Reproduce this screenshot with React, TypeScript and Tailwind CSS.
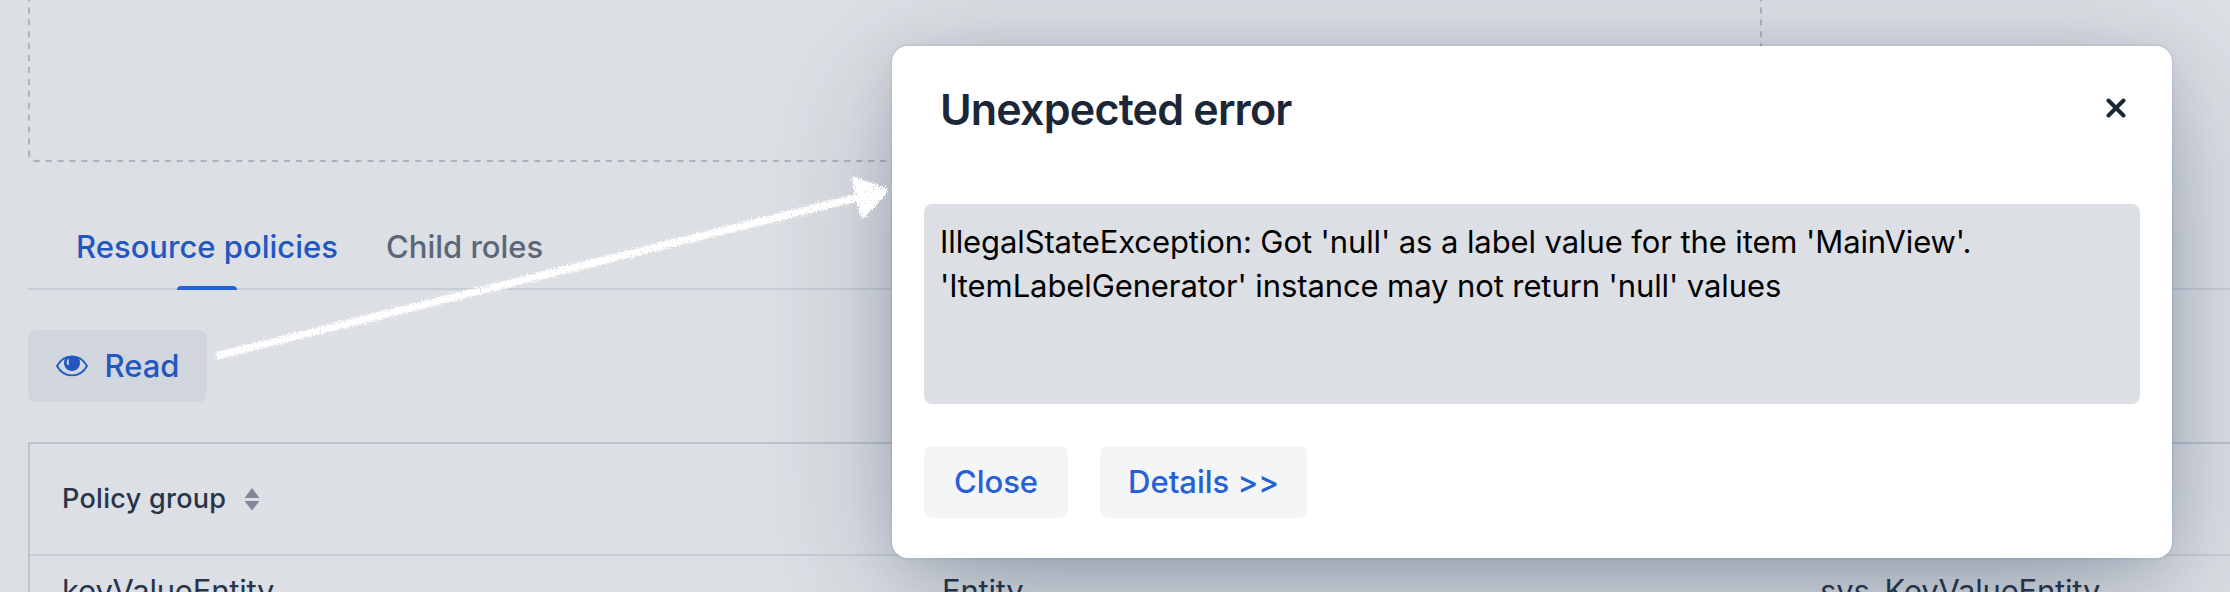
import React, { ReactNode } from 'react';

interface ButtonProps {
  children: ReactNode;
  className?: string;
}

function Button({ children, className = '' }: ButtonProps) {
  return (
    <button
      type="button"
      className={`flex h-[72px] items-center justify-center rounded-lg text-[31px] font-medium whitespace-nowrap ${className}`}
    >
      {children}
    </button>
  );
}

function EyeIcon() {
  return (
    <svg className="h-8 w-8 shrink-0" viewBox="0 0 16 16" fill="none">
      <path d="M.5 8C1.600 6 4 3.200 8 3.200S14.400 6 15.500 8C14.400 10 12 12.700 8 12.700S1.600 10 .5 8z" stroke="currentColor" strokeWidth="0.900" />
      <path d="M4.600 3.700C6.500 2.900 9.500 2.900 11.400 3.700C11.800 4.600 12 5.500 12 6.500a4 4 0 0 1-8 0c0-1 .2-1.900.6-2.800z" fill="currentColor" />
      <path d="M6.400 4.300C5.300 4.900 5.200 6.200 5.500 7.200C5.700 7.600 6.300 7.600 6.400 7.200z" fill="#d1d5dd" />
    </svg>
  );
}

function SortIcon() {
  return (
    <svg className="h-6 w-4" viewBox="0 0 16 24" fill="#7f8899">
      <path d="M8 1l7.500 10H.5z" />
      <path d="M8 23.500L.5 14h15z" />
    </svg>
  );
}

/**
 * Dashed outline of the empty drop zone, open at the top of the viewport
 */
function DropZone() {
  return (
    <svg className="h-[162px] w-[1734px] shrink-0" viewBox="0 0 1734 162" fill="none">
      <path
        d="M1 0V153Q1 161 9 161H1725Q1733 161 1733 153V0"
        stroke="#a9b2c0"
        strokeWidth="2"
        strokeDasharray="6 5.920"
        strokeDashoffset="4.500"
      />
    </svg>
  );
}

/**
 * Hand drawn chalk arrow going from the Read button to the dialog
 */
function ChalkArrow() {
  return (
    <svg className="pointer-events-none absolute left-0 top-0 h-[592px] w-[900px]" viewBox="0 0 900 592">
      <defs>
        <filter id="chalk" filterUnits="userSpaceOnUse" x="200" y="160" width="700" height="220">
          <feTurbulence type="fractalNoise" baseFrequency="0.8" numOctaves="2" seed="4" result="noise" />
          <feDisplacementMap in="SourceGraphic" in2="noise" scale="8" xChannelSelector="R" yChannelSelector="G" result="rough" />
          <feTurbulence type="fractalNoise" baseFrequency="0.45" numOctaves="2" seed="9" />
          <feColorMatrix values="0 0 0 0 1  0 0 0 0 1  0 0 0 0 1  9 0 0 0 -1.900" result="grain" />
          <feComposite in="rough" in2="grain" operator="in" />
        </filter>
      </defs>
      <g filter="url(#chalk)" stroke="#fff" strokeLinejoin="round">
        <path d="M216 356L560 271L860 197" strokeWidth="7.500" fill="none" />
        <path d="M855 180L885 191L863 215Z" strokeWidth="6" fill="#fff" />
      </g>
    </svg>
  );
}

function ErrorDialog() {
  return (
    <div className="absolute left-[892px] top-[46px] flex h-[512px] w-[1280px] flex-col rounded-2xl bg-white px-8 shadow-[0_0_0_2px_hsla(214,61%,25%,0.05),0_8px_48px_-6px_hsla(214,53%,23%,0.16),0_36px_128px_-16px_hsla(214,47%,21%,0.38)]">
      <div className="flex h-[158px] items-start justify-between pl-4 pr-[14px] pt-[34px]">
        <h2 className="text-[43px] leading-[58px] font-semibold tracking-[-0.8px] text-[#1b2637]">Unexpected error</h2>
        <svg className="mt-[18px] h-5 w-5" viewBox="0 0 20 20" fill="none" stroke="#1b2637" strokeWidth="4" strokeLinecap="round">
          <path d="M2.500 2.500l15 15M17.500 2.500l-15 15" />
        </svg>
      </div>
      <div className="h-[200px] rounded-lg bg-[#dcdfe4] px-4 pt-4 text-[31px] leading-[44px] tracking-[-0.1px] text-black">
        <p className="whitespace-nowrap">IllegalStateException: Got 'null' as a label value for the item 'MainView'.</p>
        <p className="whitespace-nowrap">'ItemLabelGenerator' instance may not return 'null' values</p>
      </div>
      <div className="mt-[42px] flex gap-8">
        <Button className="w-[144px] bg-[#f3f5f7] text-[#2461d4]">Close</Button>
        <Button className="w-[207px] bg-[#f3f5f7] text-[#2461d4]">Details &gt;&gt;</Button>
      </div>
    </div>
  );
}

export default function App() {
  return (
    <div className="relative h-[592px] w-[2230px] overflow-hidden bg-[#dcdfe4] pl-7 font-['Inter',sans-serif]">
      <DropZone />

      <div className="mt-[46px] flex h-[82px] border-b-2 border-[#c7cdd6] pl-12 text-[31px] font-medium whitespace-nowrap">
        <div className="flex w-[262px] flex-col items-center justify-between">
          <span className="mt-[17px] leading-[44px] text-[#2257c0]">Resource policies</span>
          <span className="-mb-0.5 h-1 w-[60px] rounded-t bg-[#2560d3]" />
        </div>
        <span className="mt-[17px] ml-12 leading-[44px] text-[#5b6678]">Child roles</span>
      </div>

      <Button className="mt-10 w-[179px] gap-[17px] bg-[#d1d5dd] text-[#2257c0]">
        <EyeIcon />
        Read
      </Button>

      <div className="mt-10 h-[150px] border-t-2 border-l-2 border-[#bcc3cd] whitespace-nowrap text-[#273449]">
        <div className="flex h-28 items-center gap-[18px] border-b-2 border-[#c7cdd6] pl-8 text-[27px] font-medium tracking-[0.3px]">
          Policy group
          <SortIcon />
        </div>
        <div className="flex pt-[14px] pl-8 text-[31px] leading-[42px] tracking-[-0.2px]">
          <span className="w-[880px]">keyValueEntity</span>
          <span className="w-[878px]">Entity</span>
          <span>sys_KeyValueEntity</span>
        </div>
      </div>

      <ErrorDialog />
      <ChalkArrow />
    </div>
  );
}
